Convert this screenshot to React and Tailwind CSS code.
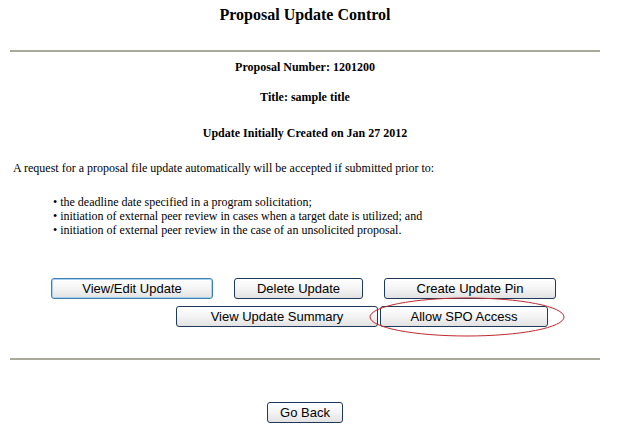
import React from 'react';

const serif = { fontFamily: '"Liberation Serif", "Times New Roman", serif' };
const sans = { fontFamily: '"Liberation Sans", Arial, sans-serif' };

function Btn({ children, w, focused }) {
  return (
    <button
      style={sans}
      className={`h-[21px] ${w} rounded-[3px] border bg-gradient-to-b from-white via-[#f4f4f4] to-[#e2e2e2] text-[13px] leading-[19px] text-black ${
        focused ? 'border-[#3c7fb1] shadow-[inset_0_0_0_1px_#a8d2f0]' : 'border-[#1d3a5a]'
      }`}
    >
      {children}
    </button>
  );
}

export default function App() {
  return (
    <div className="relative w-[644px] h-[424px] overflow-hidden bg-white text-black">
      <div className="ml-[10px] w-[590px]" style={serif}>
        <h1 className="pt-[6px] text-center text-[16px] leading-[18px] font-bold">Proposal Update Control</h1>
        <div className="mt-[26px] border-t-2 border-[#a9a99a]" />

        <p className="mt-[8px] text-center text-[12px] leading-[14px] font-bold">Proposal Number: 1201200</p>
        <p className="mt-[16px] text-center text-[12px] leading-[14px] font-bold">Title: sample title</p>
        <p className="mt-[22px] text-center text-[12px] leading-[14px] font-bold">Update Initially Created on Jan 27 2012</p>

        <p className="mt-[21px] pl-[3px] text-[12px] leading-[14px]">
          A request for a proposal file update automatically will be accepted if submitted prior to:
        </p>
        <ul className="mt-[20px] pl-[43px] text-[12px] leading-[14px]">
          <li>• the deadline date specified in a program solicitation;</li>
          <li>• initiation of external peer review in cases when a target date is utilized; and</li>
          <li>• initiation of external peer review in the case of an unsolicited proposal.</li>
        </ul>

        <div className="mt-[41px] flex pl-[41px] gap-[21px]">
          <Btn w="w-[162px]" focused>View/Edit Update</Btn>
          <Btn w="w-[129px]">Delete Update</Btn>
          <Btn w="w-[172px]">Create Update Pin</Btn>
        </div>
        <div className="mt-[7px] flex pl-[166px] gap-[2px]">
          <Btn w="w-[202px]">View Update Summary</Btn>
          <Btn w="w-[168px]">Allow SPO Access</Btn>
        </div>

        <div className="mt-[31px] border-t-2 border-[#a9a99a]" />

        <div className="mt-[42px] flex pl-[257px]">
          <Btn w="w-[76px]">Go Back</Btn>
        </div>
      </div>

      <svg className="absolute left-[368px] top-[296px]" width="198" height="42" viewBox="0 0 198 42">
        <ellipse cx="99" cy="21" rx="97" ry="19" fill="none" stroke="#c0282d" strokeWidth="1" />
      </svg>
    </div>
  );
}
